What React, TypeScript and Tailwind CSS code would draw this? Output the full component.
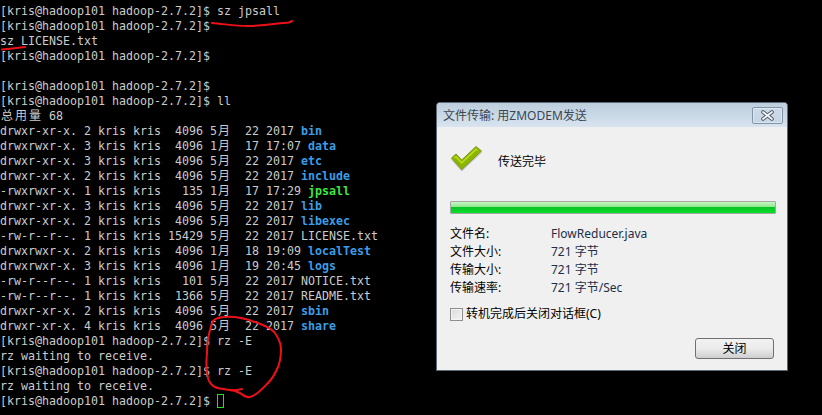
import React from 'react';

const PROMPT = '[kris@hadoop101 hadoop-2.7.2]$';
const UI_FONT = "font-['Noto_Sans','Noto_Sans_CJK_SC',sans-serif]";

type Row = { perm: string; links: string; size: string; month: string; day: string; when: string; name: string; color?: string };

const rows: Row[] = [
  { perm: 'drwxr-xr-x.', links: '2', size: ' 4096', month: '5', day: '22', when: '2017', name: 'bin', color: 'dir' },
  { perm: 'drwxrwxr-x.', links: '3', size: ' 4096', month: '1', day: '17', when: '17:07', name: 'data', color: 'dir' },
  { perm: 'drwxr-xr-x.', links: '3', size: ' 4096', month: '5', day: '22', when: '2017', name: 'etc', color: 'dir' },
  { perm: 'drwxr-xr-x.', links: '2', size: ' 4096', month: '5', day: '22', when: '2017', name: 'include', color: 'dir' },
  { perm: '-rwxrwxr-x.', links: '1', size: '  135', month: '1', day: '17', when: '17:29', name: 'jpsall', color: 'exe' },
  { perm: 'drwxr-xr-x.', links: '3', size: ' 4096', month: '5', day: '22', when: '2017', name: 'lib', color: 'dir' },
  { perm: 'drwxr-xr-x.', links: '2', size: ' 4096', month: '5', day: '22', when: '2017', name: 'libexec', color: 'dir' },
  { perm: '-rw-r--r--.', links: '1', size: '15429', month: '5', day: '22', when: '2017', name: 'LICENSE.txt' },
  { perm: 'drwxrwxr-x.', links: '2', size: ' 4096', month: '1', day: '18', when: '19:09', name: 'localTest', color: 'dir' },
  { perm: 'drwxrwxr-x.', links: '3', size: ' 4096', month: '1', day: '19', when: '20:45', name: 'logs', color: 'dir' },
  { perm: '-rw-r--r--.', links: '1', size: '  101', month: '5', day: '22', when: '2017', name: 'NOTICE.txt' },
  { perm: '-rw-r--r--.', links: '1', size: ' 1366', month: '5', day: '22', when: '2017', name: 'README.txt' },
  { perm: 'drwxr-xr-x.', links: '2', size: ' 4096', month: '5', day: '22', when: '2017', name: 'sbin', color: 'dir' },
  { perm: 'drwxr-xr-x.', links: '4', size: ' 4096', month: '5', day: '22', when: '2017', name: 'share', color: 'dir' },
];

// wide chars take two terminal cells
const Wide = ({ children }: { children: string }) => (
  <span className="inline-block w-[14px] text-[12px] leading-[15px] text-center">{children}</span>
);

const Line = ({ children }: { children?: React.ReactNode }) => (
  <div className="h-[15px] leading-[15px] whitespace-pre">{children}</div>
);

const Terminal = () => (
  <div className="font-['DejaVu_Sans_Mono','Noto_Sans_CJK_SC',monospace] text-[11.63px] text-[#cccccc] pt-[4px]">
    <Line>{PROMPT} sz jpsall</Line>
    <Line>{PROMPT}</Line>
    <Line>sz LICENSE.txt</Line>
    <Line>{PROMPT}</Line>
    <Line />
    <Line>{PROMPT}</Line>
    <Line>{PROMPT} ll</Line>
    <Line><Wide>总</Wide><Wide>用</Wide><Wide>量</Wide> 68</Line>
    {rows.map((r) => (
      <Line key={r.name}>
        {r.perm} {r.links} kris kris {r.size} {r.month}<Wide>月</Wide>  {r.day} {r.when}{' '}
        <span className={r.color === 'dir' ? 'font-bold text-[#3b9de6]' : r.color === 'exe' ? 'font-bold text-[#3ee83e]' : ''}>{r.name}</span>
      </Line>
    ))}
    <Line>{PROMPT} rz -E</Line>
    <Line>rz waiting to receive.</Line>
    <Line>{PROMPT} rz -E</Line>
    <Line>rz waiting to receive.</Line>
    <Line>
      {PROMPT} <span className="inline-block w-[7px] h-[14px] border border-[#22e022] align-[-3px]" />
    </Line>
  </div>
);

const Scribbles = () => (
  <svg className="absolute inset-0 pointer-events-none" width={822} height={415} fill="none" stroke="#ee1018" strokeWidth={2} strokeLinecap="round" strokeLinejoin="round">
    <path d="M212 23 C225 24 238 26.5 250 26 C265 25.5 280 23 289 22.5 L292 21" />
    <path d="M2 49.5 C9 48.5 17 48 25 47" />
    <path d="M213 321 C216 318 219 317 225 317 C235 316 247 319 258 323 C266 326 272 329 275 333 C279 339 281 343 281 349 C281 356 280 362 278 367 C275 374 272 379 268 383 C262 389 256 396 250 397 C246 398 243 395 240 393 C235 391 233 390 230 390 C225 389 219 389 215 387 C211 385 209 382 208 378 C206 370 206 362 207 353 C207 345 208 337 210 330 C211 326 212 323 213 321 Z" />
    <path d="M230 390 C234 391 238 390 242 389" />
  </svg>
);

const CheckMark = () => (
  <svg width={31} height={26} viewBox="0 0 31 26">
    <path d="M0.5 13.5 L10.7 25 L30.5 6.5 L10.7 23.5 Z" fill="#b4b4b4" stroke="#c4c4c4" strokeWidth={1} />
    <path d="M0.5 12 L5 8 L10.7 14 L25 0.5 L30.5 5 L10.7 23.5 Z" fill="#8cb400" stroke="#7c9a14" strokeWidth={1} strokeLinejoin="round" />
    <path d="M2.5 12 L5 9.8 L10.7 15.8 L25 2.3 L27.5 4.5 L25 4.5 L10.7 18 L5 12 Z" fill="#b8de22" />
  </svg>
);

const InfoRow = ({ label, value }: { label: string; value: string }) => (
  <div className="flex h-[18px] items-center">
    <div className="w-[101px]">{label}</div>
    <div className="text-[#1c2f4a]">{value}</div>
  </div>
);

const TransferDialog = () => (
  <div className={`absolute left-[436px] top-[102px] w-[352px] h-[269px] flex flex-col bg-[#f0f0f0] border border-[#5d6b78] rounded-t-[4px] text-[12px] text-black ${UI_FONT}`}>
    <div className="h-[24px] shrink-0 flex items-center justify-between pl-[6px] pr-[4px] rounded-t-[3px] bg-gradient-to-b from-[#bccddc] to-[#d8e4f0]">
      <span className="text-[#3c4650] mt-[1px]">文件传输: 用ZMODEM发送</span>
      <div className="w-[31px] h-[17px] flex items-center justify-center rounded-[2px] border border-[#8293ab] bg-gradient-to-b from-[#cddae7] to-[#c6d5e5] shadow-[inset_0_0_0_1px_#dde6ef]">
        <svg width={13} height={11} viewBox="0 0 13 11">
          <path d="M2 2 L11 9 M11 2 L2 9" stroke="#4a5563" strokeWidth={3.6} strokeLinecap="round" />
          <path d="M2 2 L11 9 M11 2 L2 9" stroke="#f4f6f8" strokeWidth={1.8} strokeLinecap="round" />
        </svg>
      </div>
    </div>
    <div className="flex-1 flex flex-col pl-[13px] pr-[11px]">
      <div className="flex items-start h-[47px] mt-[19px]">
        <div className="ml-[1px] w-[31px]">
          <CheckMark />
        </div>
        <span className="ml-[16px] mt-[8px] leading-[16px]">传送完毕</span>
      </div>
      <div className="mt-[8px] h-[13px] flex flex-col rounded-[1px] border border-[#a6a6a6] overflow-hidden">
        <div className="h-[5px] bg-gradient-to-b from-[#c9f6c6] to-[#8be78b]" />
        <div className="flex-1 bg-gradient-to-b from-[#09c026] to-[#08e02c]" />
      </div>
      <div className="mt-[11px] flex flex-col">
        <InfoRow label="文件名:" value="FlowReducer.java" />
        <InfoRow label="文件大小:" value="721 字节" />
        <InfoRow label="传输大小:" value="721 字节" />
        <InfoRow label="传输速率:" value="721 字节/Sec" />
      </div>
      <label className="mt-[10px] flex items-center h-[14px]">
        <span className="w-[13px] h-[13px] border border-[#8e8e8e] bg-gradient-to-br from-[#dcdcdc] to-[#f4f4f4] shadow-[inset_0_0_0_1px_#f4f4f4]" />
        <span className="ml-[3px]">转机完成后关闭对话框(C)</span>
      </label>
      <div className="mt-[17px] flex justify-end">
        <button className="mr-[2px] w-[79px] h-[21px] flex items-center justify-center rounded-[3px] border border-[#707070] bg-gradient-to-b from-[#f2f2f2] via-[#ebebeb] to-[#cfcfcf]">关闭</button>
      </div>
    </div>
  </div>
);

export default function App() {
  return (
    <div className="relative w-[822px] h-[415px] overflow-hidden bg-black">
      <Terminal />
      <Scribbles />
      <TransferDialog />
    </div>
  );
}
